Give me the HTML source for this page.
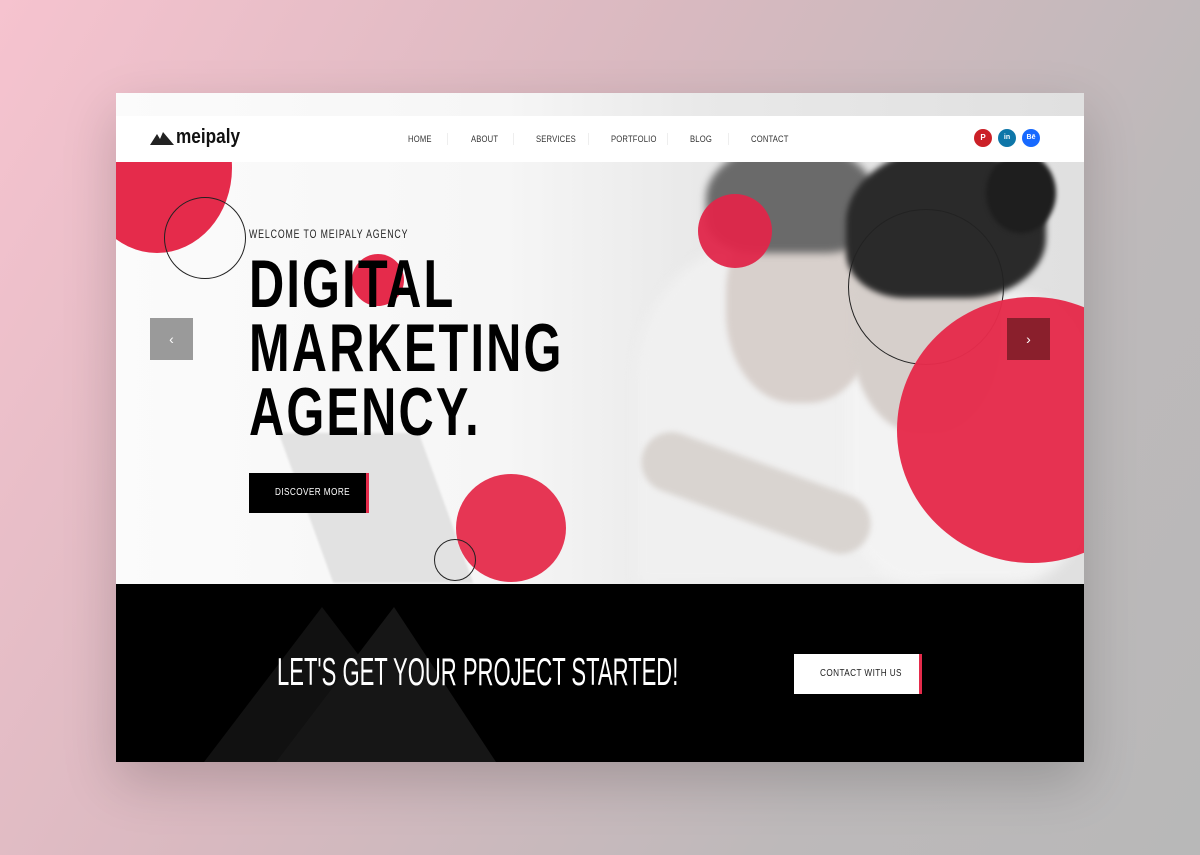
<!DOCTYPE html>
<html><head><meta charset="utf-8"><style>
*{margin:0;padding:0;box-sizing:border-box}
body{width:1200px;height:855px;overflow:hidden;background:linear-gradient(120deg,#f6c3cf 0%,#d9b9c0 40%,#bdb9ba 75%,#b8b8b8 100%);font-family:"Liberation Sans",sans-serif;position:relative}
.card{position:absolute;left:116px;top:93px;width:968px;height:669px;background:#fff;overflow:hidden;box-shadow:0 20px 50px rgba(0,0,0,.18)}
.abs{position:absolute}
.sx{display:inline-block;transform-origin:left center;white-space:nowrap}
.nav span{position:absolute;top:41px;font-size:9px;color:#333;letter-spacing:.2px;transform:scaleX(.85);transform-origin:left center;white-space:nowrap}
.sep{position:absolute;top:40px;width:1px;height:12px;background:#eee}
</style></head><body>
<div class="card">
  <div class="abs" style="left:0;top:0;width:968px;height:491px;background:linear-gradient(90deg,#fbfbfb 0%,#f6f6f6 40%,#e9e9e9 60%,#e0e0e0 100%)"></div>
  <div class="abs" style="left:520px;top:150px;width:300px;height:341px;background:#f0f0f0;border-radius:40% 40% 0 0;filter:blur(6px)"></div>
  <div class="abs" style="left:730px;top:200px;width:240px;height:291px;background:#f3f3f3;border-radius:30%;filter:blur(6px)"></div>
  <div class="abs" style="left:610px;top:110px;width:150px;height:200px;background:#d8d0cc;border-radius:45%;filter:blur(3px)"></div>
  <div class="abs" style="left:735px;top:120px;width:150px;height:220px;background:#d6cfcb;border-radius:45%;filter:blur(3px)"></div>
  <div class="abs" style="left:590px;top:50px;width:170px;height:110px;background:#6a6a6a;border-radius:50% 50% 30% 30%;filter:blur(4px)"></div>
  <div class="abs" style="left:730px;top:55px;width:200px;height:150px;background:#2a2a2a;border-radius:50% 50% 40% 30%;filter:blur(3px)"></div>
  <div class="abs" style="left:870px;top:60px;width:70px;height:80px;background:#1e1e1e;border-radius:50%;filter:blur(2px)"></div>
  <div class="abs" style="left:190px;top:340px;width:140px;height:150px;background:#e2e2e2;transform:skewX(20deg);filter:blur(1px)"></div>
  <div class="abs" style="left:520px;top:370px;width:240px;height:60px;background:#d9d4d0;border-radius:30px;transform:rotate(20deg);filter:blur(3px)"></div>

  <div class="abs" style="left:0;top:23px;width:968px;height:46px;background:#fff"></div>
  <svg class="abs" style="left:34px;top:39px" width="24" height="13" viewBox="0 0 24 13"><path d="M0 13 L7 2 L10 7 L13 0 L24 13Z" fill="#222"/></svg>
  <div class="abs" style="left:60px;top:33px;font-size:20px;font-weight:bold;color:#111"><span class="sx" style="transform:scaleX(.86)">meipaly</span></div>
  <div class="nav">
    <span style="left:292px">HOME</span><div class="sep" style="left:331px"></div>
    <span style="left:355px">ABOUT</span><div class="sep" style="left:397px"></div>
    <span style="left:420px">SERVICES</span><div class="sep" style="left:472px"></div>
    <span style="left:495px">PORTFOLIO</span><div class="sep" style="left:551px"></div>
    <span style="left:574px">BLOG</span><div class="sep" style="left:612px"></div>
    <span style="left:635px">CONTACT</span>
  </div>
  <div class="abs" style="left:858px;top:36px;width:18px;height:18px;border-radius:50%;background:#cb2027;color:#fff;font-size:8px;font-weight:bold;text-align:center;line-height:18px">P</div>
  <div class="abs" style="left:882px;top:36px;width:18px;height:18px;border-radius:50%;background:#0e76a8;color:#fff;font-size:7px;font-weight:bold;text-align:center;line-height:18px">in</div>
  <div class="abs" style="left:906px;top:36px;width:18px;height:18px;border-radius:50%;background:#1769ff;color:#fff;font-size:7px;font-weight:bold;text-align:center;line-height:18px">Bē</div>

  <div class="abs" style="left:-34px;top:-10px;width:150px;height:170px;border-radius:50%;background:#e52b4b;clip-path:inset(79px 0 0 0)"></div>
  <div class="abs" style="left:48px;top:104px;width:82px;height:82px;border-radius:50%;border:1.3px solid #222"></div>
  <div class="abs" style="left:236px;top:161px;width:52px;height:52px;border-radius:50%;background:#e52b4b"></div>
  <div class="abs" style="left:582px;top:101px;width:74px;height:74px;border-radius:50%;background:#e0264a;opacity:.95"></div>
  <div class="abs" style="left:732px;top:116px;width:156px;height:156px;border-radius:50%;border:1.3px solid #222"></div>
  <div class="abs" style="left:781px;top:204px;width:270px;height:266px;border-radius:50%;background:#e52b4b;opacity:.97"></div>
  <div class="abs" style="left:340px;top:381px;width:110px;height:108px;border-radius:50%;background:#e52b4b;opacity:.95"></div>
  <div class="abs" style="left:318px;top:446px;width:42px;height:42px;border-radius:50%;border:1.3px solid #222"></div>

  <div class="abs" style="left:133px;top:134px;font-size:12px;color:#222;letter-spacing:1.2px"><span class="sx" style="transform:scaleX(.73)">WELCOME TO MEIPALY AGENCY</span></div>
  <div class="abs" style="left:133px;top:159px;font-size:68px;font-weight:bold;color:#000;line-height:64px;letter-spacing:3px">
    <div><span class="sx" style="transform:scaleX(.717)">DIGITAL</span></div>
    <div><span class="sx" style="transform:scaleX(.717)">MARKETING</span></div>
    <div><span class="sx" style="transform:scaleX(.717)">AGENCY.</span></div>
  </div>
  <div class="abs" style="left:133px;top:380px;width:120px;height:40px;background:#000;border-right:3px solid #e52b4b;color:#fff;font-size:10px;line-height:40px;padding-left:26px;letter-spacing:.5px"><span class="sx" style="transform:scaleX(.82)">DISCOVER MORE</span></div>

  <div class="abs" style="left:34px;top:225px;width:43px;height:42px;background:#9a9a9a;color:#fff;text-align:center;line-height:42px;font-size:14px">‹</div>
  <div class="abs" style="left:891px;top:225px;width:43px;height:42px;background:#8a1f2c;color:#fff;text-align:center;line-height:42px;font-size:14px">›</div>

  <div class="abs" style="left:0;top:491px;width:968px;height:178px;background:#000;overflow:hidden">
    <svg class="abs" style="left:0;top:0" width="968" height="178"><path d="M88 178 L206 23 L324 178Z" fill="#111"/><path d="M160 178 L278 23 L380 178Z" fill="#161616"/></svg>
    <div class="abs" style="left:161px;top:67px;font-size:39px;color:#fff"><span class="sx" style="transform:scaleX(.565)">LET'S GET YOUR PROJECT STARTED!</span></div>
    <div class="abs" style="left:678px;top:70px;width:128px;height:40px;background:#fff;border-right:3px solid #e52b4b;color:#222;font-size:10px;line-height:40px;padding-left:26px;letter-spacing:.5px"><span class="sx" style="transform:scaleX(.82)">CONTACT WITH US</span></div>
  </div>
</div>
</body></html>
